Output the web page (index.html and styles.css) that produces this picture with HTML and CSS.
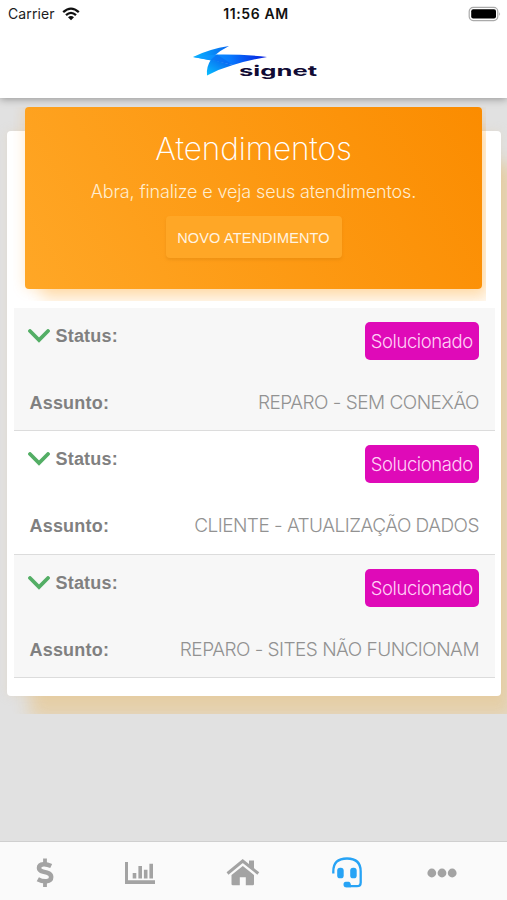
FILE: index.html
```html
<!DOCTYPE html>
<html lang="pt-BR">
<head>
<meta charset="utf-8">
<meta name="viewport" content="width=device-width, initial-scale=1">
<title>Atendimentos</title>
<link rel="stylesheet" href="styles.css">
</head>
<body>
<header class="topbar">
  <div class="statusbar">
    <div class="carrier"><span>Carrier</span>
      <svg width="18" height="14" viewBox="0 0 18 14" fill="none" stroke="#111" stroke-width="2.3"><path d="M1.2 5.2Q9-2 16.8 5.2M4 8.2Q9 3.6 14 8.2"/><path d="M6 10.2Q9 7.8 12 10.2L9 13.2Z" fill="#111" stroke="none"/></svg>
    </div>
    <div class="clock">11:56 AM</div>
    <svg class="battery" width="34" height="16" viewBox="0 0 34 16"><rect x="1.2" y="1.4" width="28.6" height="13.2" rx="4" fill="#fff" stroke="#aaa" stroke-width="1.2"/><rect x="3.2" y="3.2" width="24.8" height="9.4" rx="2" fill="#000"/><path d="M31.3 6q1.6 2 0 4z" fill="#999"/></svg>
  </div>
  <svg class="logo" width="126" height="36" viewBox="0 0 126 36" role="img" aria-label="signet">
    <defs>
      <linearGradient id="wing"><stop offset="0" stop-color="#08b5ff"/><stop offset="1" stop-color="#0864ef"/></linearGradient>
      <linearGradient id="beam"><stop offset="0" stop-color="#10aaff"/><stop offset=".5" stop-color="#087bff"/><stop offset="1" stop-color="#0619dc"/></linearGradient>
      <linearGradient id="tail" x1="0" y1="1" x2="1" y2="0"><stop offset="0" stop-color="#08c0ff"/><stop offset="1" stop-color="#0856ee"/></linearGradient>
    </defs>
    <path d="M0 12Q16 4 36 1Q27 5.500 21 11L18 15.500Z" fill="url(#wing)"/>
    <path d="M0 12L23 9.500Q50 9 74 12Q56 15 40 20L17 15Z" fill="url(#beam)"/>
    <path d="M18 14.500L40 20Q26 24 14 30.500Q13 22 18 14.500Z" fill="url(#tail)"/>
    <path d="M18 14.500L24 9.500L40 20Z" fill="#0757e8" opacity=".4"/>
    <text class="wordmark" x="46" y="30.500" textLength="78" lengthAdjust="spacingAndGlyphs">signet</text>
  </svg>
</header>
<main>
  <section class="card">
    <div class="hero-wrap">
      <div class="hero">
        <h1>Atendimentos</h1>
        <p>Abra, finalize e veja seus atendimentos.</p>
        <button type="button">NOVO ATENDIMENTO</button>
      </div>
    </div>
    <div class="list">
      <article class="row">
        <div class="line"><div class="label"><svg class="chevron" viewBox="0 0 22 14"><path d="M2 2l9 9 9-9"/></svg>Status:</div><span class="badge">Solucionado</span></div>
        <div class="line subject"><div class="label">Assunto:</div><span class="value">REPARO - SEM CONEXÃO</span></div>
      </article>
      <article class="row">
        <div class="line"><div class="label"><svg class="chevron" viewBox="0 0 22 14"><path d="M2 2l9 9 9-9"/></svg>Status:</div><span class="badge">Solucionado</span></div>
        <div class="line subject"><div class="label">Assunto:</div><span class="value">CLIENTE - ATUALIZAÇÃO DADOS</span></div>
      </article>
      <article class="row">
        <div class="line"><div class="label"><svg class="chevron" viewBox="0 0 22 14"><path d="M2 2l9 9 9-9"/></svg>Status:</div><span class="badge">Solucionado</span></div>
        <div class="line subject"><div class="label">Assunto:</div><span class="value">REPARO - SITES NÃO FUNCIONAM</span></div>
      </article>
    </div>
  </section>
</main>
<nav class="tabs">
  <a><svg width="18" height="30" viewBox="0 0 18 30" fill="none" stroke="#a3a3a3"><path d="M9 .5v6M9 23v6" stroke-width="3.8"/><path d="M15.200 8Q11 6 7.500 6.200Q3 6.600 3 10Q3 12.600 7 13.600L11 14.700Q15.200 16 15.200 19Q15.200 22.800 10.500 23.300Q6 23.600 1.800 21.200" stroke-width="4.500"/></svg></a>
  <a><svg width="30" height="22" viewBox="0 0 30 22" fill="#a3a3a3"><path d="M0 0h3v18.2h27V22H0zM7.7 11h3.6v5.5H7.7zM13.4 4h3.6v12.5h-3.6zM18.9 7.8h3.6v8.7h-3.6zM24.4 1.8H28v14.7h-3.6z"/></svg></a>
  <a><svg width="34" height="27" viewBox="0 0 34 27"><path d="M1.5 14.5L16.7 2 32.3 14.5" fill="none" stroke="#a3a3a3" stroke-width="3"/><path d="M23 1.5h5v9l-5-4zM16.8 7L28 16v9q0 1.2-1.2 1.2h-7v-8h-6v8h-7Q5.500 26.200 5.500 25v-9z" fill="#a3a3a3"/></svg></a>
  <a><svg width="30" height="31" viewBox="0 0 30 31" fill="none" stroke="#27a3f5"><path d="M1.3 16.500V14.500Q1.300 1.500 15 1.500T28.700 14.500V25.500Q28.700 29.200 25 29.200H14" stroke-width="2.3"/><rect x="5.200" y="10.800" width="6.500" height="10.500" rx="2.900" fill="#27a3f5" stroke="none"/><rect x="18.200" y="10.800" width="6.500" height="10.500" rx="2.900" fill="#27a3f5" stroke="none"/><path d="M14 24.700h2.700q1.800 0 2.300 3.500v2H14q-2.500 0-2.500-2.800T14 24.700z" fill="#27a3f5" stroke="none"/></svg></a>
  <a><svg width="30" height="10" viewBox="0 0 30 10" fill="#a3a3a3"><circle cx="4.800" cy="5" r="4.400"/><circle cx="15" cy="5" r="4.400"/><circle cx="25.200" cy="5" r="4.400"/></svg></a>
</nav>
</body>
</html>
```
FILE: styles.css
```css
* { box-sizing: border-box; }
body {
  margin: 0;
  height: 900px;
  display: flex;
  flex-direction: column;
  overflow: hidden;
  background: #e1e1e1;
  font-family: "Liberation Sans", sans-serif;
}
.topbar {
  position: relative;
  z-index: 2;
  flex: none;
  height: 98px;
  background: #fff;
  box-shadow: 0 1px 8px rgba(0, 0, 0, .36);
  display: flex;
  flex-direction: column;
  align-items: center;
}
.statusbar {
  width: 100%;
  height: 27px;
  padding: 0 5px 0 8px;
  display: grid;
  grid-template-columns: 1fr auto 1fr;
  align-items: center;
  font: 14px/27px Inter, sans-serif;
  color: #1c1c1c;
}
.carrier { display: flex; align-items: center; gap: 7px; letter-spacing: .1px; }
.clock { padding-left: 2px; font-weight: 600; letter-spacing: .6px; color: #111; }
.battery { justify-self: end; }
.logo { display: block; margin: 18px 0 0 5px; }
.wordmark { font: 700 14.5px Inter, sans-serif; fill: #110b34; }
main { flex: 1; min-height: 0; display: flex; align-items: flex-start; }
.card {
  flex: none;
  display: flex;
  flex-direction: column;
  width: 494px;
  height: 565px;
  margin: 33px 0 0 7px;
  padding: 0 6px;
  border-radius: 4px;
  background: #fff;
  box-shadow: 18px 28px 16px -5px rgba(240, 165, 35, .29), 0 0 10px rgba(225, 205, 175, .35);
  clip-path: inset(-33px -10px -18px -10px);
}
.hero-wrap {
  flex: none;
  height: 194px;
  margin-top: -24px;
  padding-left: 12px;
  width: 473px;
  overflow: hidden;
}
.hero {
  height: 182px;
  width: 457px;
  border-radius: 4px;
  background: linear-gradient(60deg, #ffa726, #fb8c00);
  box-shadow: 12px 16px 14px -5px rgba(255, 152, 0, .24), 0 0 14px rgba(255, 152, 0, .22);
  color: #fff;
  display: flex;
  flex-direction: column;
  align-items: center;
  text-align: center;
}
h1 {
  margin: 22px 0 0;
  font: 200 31.5px/40px Inter, sans-serif;
  letter-spacing: -.1px;
}
p {
  margin: 11px 0 0;
  font: 300 18px/24px Inter, sans-serif;
  letter-spacing: -.15px;
  white-space: nowrap;
  color: #ffedcf;
}
button {
  width: 176px;
  height: 42px;
  margin-top: 12px;
  padding: 2px 0 0;
  border: 0;
  border-radius: 4px;
  background: #ffa726;
  color: #fff4e2;
  box-shadow: 0 2px 3px rgba(200, 120, 10, .28);
  font: 14.500px "Liberation Sans", sans-serif;
  letter-spacing: .15px;
  white-space: nowrap;
}
.list { width: 481px; margin-left: .5px; padding-top: 7px; }
.row {
  height: 123.300px;
  padding: 14px 15.500px 0 15px;
  border-bottom: 1.500px solid #dcdcdc;
  background: #f7f7f7;
}
.row:nth-child(even) { background: #fff; }
.line { display: flex; justify-content: space-between; align-items: flex-start; }
.label {
  display: flex;
  align-items: center;
  height: 28px;
  color: #808080;
  font: 700 18px/28px "Liberation Sans", sans-serif;
  letter-spacing: .2px;
}
.chevron {
  width: 22px;
  height: 14px;
  margin-right: 6px;
  margin-left: -1px;
  fill: none;
  stroke: #53ae65;
  stroke-width: 3.800px;
  stroke-linecap: round;
}
.badge {
  width: 114.500px;
  height: 38px;
  border-radius: 5px;
  background: #df0ab8;
  color: #ffd0f6;
  font: 300 18.500px/39px Inter, sans-serif;
  letter-spacing: -.4px;
  text-align: center;
}
.subject { margin-top: 29px; padding-left: 1px; }
.value {
  color: #929292;
  font: 300 19px/28px Inter, sans-serif;
  letter-spacing: -.52px;
  white-space: nowrap;
}
.tabs {
  flex: none;
  height: 59px;
  border-top: 1px solid #cfcfcf;
  background: #fafafa;
  display: grid;
  grid-template-columns: 90px 99px 108px 99px 91px;
}
.tabs a { display: flex; align-items: center; justify-content: center; padding-top: 3px; }
```
